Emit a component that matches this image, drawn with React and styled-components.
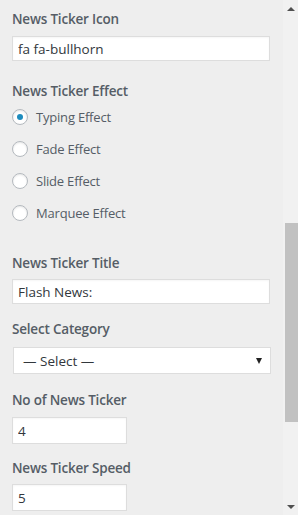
import React from 'react';
import styled, { createGlobalStyle } from 'styled-components';

const GlobalStyle = createGlobalStyle`
  html, body {
    margin: 0;
    padding: 0;
    background: #eeeeee;
  }
  * {
    box-sizing: border-box;
  }
`;

const effects = ['Typing Effect', 'Fade Effect', 'Slide Effect', 'Marquee Effect'];

const App = () => {
  return (
    <>
      <GlobalStyle />
      <Page>
        <Panel>
          <Field top={9}>
            <Label>News Ticker Icon</Label>
            <TextInput defaultValue="fa fa-bullhorn" h={25} />
          </Field>
          <Field top={20}>
            <Label>News Ticker Effect</Label>
            <RadioList>
              {effects.map((name, i) => (
                <RadioRow key={name}>
                  <RadioCircle checked={i === 0} />
                  <RadioText>{name}</RadioText>
                </RadioRow>
              ))}
            </RadioList>
          </Field>
          <Field top={24}>
            <Label>News Ticker Title</Label>
            <TextInput defaultValue="Flash News:" h={25} gap={6} />
          </Field>
          <Field top={15}>
            <Label>Select Category</Label>
            <SelectBox>
              <span>— Select —</span>
              <SelectArrow />
            </SelectBox>
          </Field>
          <Field top={16}>
            <Label>No of News Ticker</Label>
            <TextInput defaultValue="4" h={27} small />
          </Field>
          <Field top={14}>
            <Label>News Ticker Speed</Label>
            <TextInput defaultValue="5" h={27} gap={6} small />
          </Field>
        </Panel>
        <ScrollBar>
          <ArrowCell>
            <ArrowUp />
          </ArrowCell>
          <Track>
            <Thumb />
          </Track>
          <ArrowCell>
            <ArrowDown />
          </ArrowCell>
        </ScrollBar>
      </Page>
    </>
  );
};

const Page = styled.div`
  display: flex;
  width: 298px;
  height: 515px;
  overflow: hidden;
  font-family: 'Open Sans', 'Noto Sans', sans-serif;
`;

const Panel = styled.div`
  flex: 1;
  padding: 0 12px;
  display: flex;
  flex-direction: column;
`;

const Field = styled.div`
  display: flex;
  flex-direction: column;
  margin-top: ${(p) => p.top}px;
`;

const Label = styled.div`
  font-size: 13.5px;
  line-height: 20px;
  font-weight: 600;
  color: #555d66;
  letter-spacing: -0.2px;
`;

const TextInput = styled.input`
  margin-top: ${(p) => p.gap || 7}px;
  width: ${(p) => (p.small ? '115px' : '258px')};
  height: ${(p) => p.h}px;
  border: 1px solid #dddddd;
  background: #ffffff;
  padding: 0 5px;
  font-family: inherit;
  font-size: 13.5px;
  color: #32373c;
  outline: none;
  box-shadow: inset 0 1px 2px rgba(0, 0, 0, 0.04);
`;

const RadioList = styled.div`
  display: flex;
  flex-direction: column;
`;

const RadioRow = styled.div`
  height: 32px;
  display: flex;
  align-items: center;
  gap: 8px;
`;

const RadioCircle = styled.span`
  width: 16px;
  height: 16px;
  border-radius: 50%;
  border: 1px solid #b4b9be;
  background: #ffffff;
  box-shadow: inset 0 1px 2px rgba(0, 0, 0, 0.1);
  display: flex;
  align-items: center;
  justify-content: center;
  &::after {
    content: '';
    display: ${(p) => (p.checked ? 'block' : 'none')};
    width: 6px;
    height: 6px;
    border-radius: 50%;
    background: #1e8cbe;
  }
`;

const RadioText = styled.span`
  font-size: 13px;
  color: #555d66;
  letter-spacing: -0.2px;
`;

const SelectBox = styled.div`
  margin-top: 8px;
  width: 258px;
  height: 27px;
  margin-left: 1px;
  border: 1px solid #dddddd;
  background: #ffffff;
  display: flex;
  align-items: center;
  justify-content: space-between;
  padding: 0 8px 0 9px;
  font-size: 13.5px;
  color: #32373c;
`;

const SelectArrow = styled.span`
  width: 0;
  height: 0;
  border-left: 3px solid transparent;
  border-right: 3px solid transparent;
  border-top: 6px solid #222;
`;

const ScrollBar = styled.div`
  width: 17px;
  height: 100%;
  background: #f1f1f1;
  display: flex;
  flex-direction: column;
`;

const ArrowCell = styled.div`
  height: 17px;
  display: flex;
  align-items: center;
  justify-content: center;
`;

const ArrowUp = styled.span`
  border-left: 4px solid transparent;
  border-right: 4px solid transparent;
  border-bottom: 4px solid #505050;
`;

const ArrowDown = styled.span`
  border-left: 4px solid transparent;
  border-right: 4px solid transparent;
  border-top: 4px solid #505050;
`;

const Track = styled.div`
  flex: 1;
  padding: 206px 0 0 2px;
`;

const Thumb = styled.div`
  width: 13px;
  height: 199px;
  background: #c1c1c1;
`;

export default App;
